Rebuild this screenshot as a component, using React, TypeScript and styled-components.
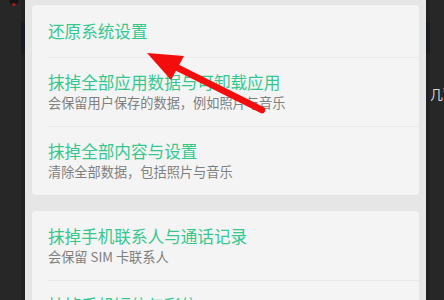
import styled, { createGlobalStyle } from "styled-components";

const GlobalStyle = createGlobalStyle`
  html, body {
    margin: 0;
    padding: 0;
    background: #272727;
    font-family: "Noto Sans CJK SC", "Noto Sans", sans-serif;
  }
`;

type Item = {
  title: string;
  subtitle?: string;
};

const groups: Item[][] = [
  [
    { title: "还原系统设置" },
    {
      title: "抹掉全部应用数据与可卸载应用",
      subtitle: "会保留用户保存的数据，例如照片与音乐",
    },
    { title: "抹掉全部内容与设置", subtitle: "清除全部数据，包括照片与音乐" },
  ],
  [
    { title: "抹掉手机联系人与通话记录", subtitle: "会保留 SIM 卡联系人" },
    { title: "抹掉手机短信与彩信", subtitle: "会保留 SIM 卡短信" },
  ],
];

const Screen = styled.div`
  position: relative;
  display: flex;
  width: 444px;
  height: 300px;
  overflow: hidden;
`;

const SideStrip = styled.div<{ $side: "left" | "right" }>`
  position: relative;
  flex: none;
  width: ${(p) => (p.$side === "left" ? 25 : 18)}px;
  background: #272727;
  display: flex;
  flex-direction: ${(p) => (p.$side === "left" ? "row-reverse" : "row")};
`;

const Shade = styled.div`
  width: 4px;
  background: #212121;
  display: flex;
  flex-direction: column;
  padding-top: 23px;
`;

const ShadeBar = styled.div`
  height: 30px;
  background: #181b20;
`;

const TopIcon = styled.svg`
  position: absolute;
  left: 8px;
  top: -5px;
`;

const EdgeText = styled.span`
  position: absolute;
  left: 4px;
  top: 84px;
  font-size: 13px;
  color: #d8d8d8;
  white-space: nowrap;
`;

const Panel = styled.div`
  flex: none;
  width: 401px;
  box-sizing: border-box;
  background: #e6e6e6;
  padding: 5px 7px 0 7px;
  display: flex;
  flex-direction: column;
  gap: 16px;
`;

const Card = styled.div`
  background: #f4f4f4;
  border-radius: 3px;
  box-shadow: 0 0 1px rgba(0, 0, 0, 0.08);
  display: flex;
  flex-direction: column;
`;

const Row = styled.div<{ $first: boolean; $single: boolean }>`
  position: relative;
  padding: ${(p) => (p.$single ? "15px 16px" : "14px 16px")};
  display: flex;
  flex-direction: column;

  &::before {
    content: "";
    display: ${(p) => (p.$first ? "none" : "block")};
    position: absolute;
    left: 16px;
    right: 0;
    top: 0;
    height: 1px;
    background: #e9e9e9;
  }
`;

const Title = styled.div`
  font-size: 16.6px;
  line-height: 22px;
  color: #34c88f;
`;

const Subtitle = styled.div`
  font-size: 13.2px;
  line-height: 19px;
  color: #7f7f7f;
`;

const ArrowOverlay = styled.svg`
  position: absolute;
  left: 0;
  top: 0;
  pointer-events: none;
`;

export default function App() {
  return (
    <>
      <GlobalStyle />
      <Screen>
        <SideStrip $side="left">
          <Shade>
            <ShadeBar />
          </Shade>
          <TopIcon width="12" height="12" viewBox="0 0 12 12">
            <circle cx="6" cy="5" r="5" fill="#151515" />
            <circle cx="6" cy="9.5" r="1.6" fill="#c01818" />
          </TopIcon>
        </SideStrip>
        <Panel>
          {groups.map((group, gi) => (
            <Card key={gi}>
              {group.map((item, i) => (
                <Row key={item.title} $first={i === 0} $single={!item.subtitle}>
                  <Title>{item.title}</Title>
                  {item.subtitle && <Subtitle>{item.subtitle}</Subtitle>}
                </Row>
              ))}
            </Card>
          ))}
        </Panel>
        <SideStrip $side="right">
          <Shade>
            <ShadeBar />
          </Shade>
          <EdgeText>几”</EdgeText>
        </SideStrip>
        <ArrowOverlay width="444" height="300" viewBox="0 0 444 300">
          <line
            x1="174"
            y1="66"
            x2="262"
            y2="110"
            stroke="#f40d0d"
            strokeWidth="6.5"
            strokeLinecap="round"
          />
          <polygon points="147,53 184,56 171,80" fill="#f40d0d" />
        </ArrowOverlay>
      </Screen>
    </>
  );
}
